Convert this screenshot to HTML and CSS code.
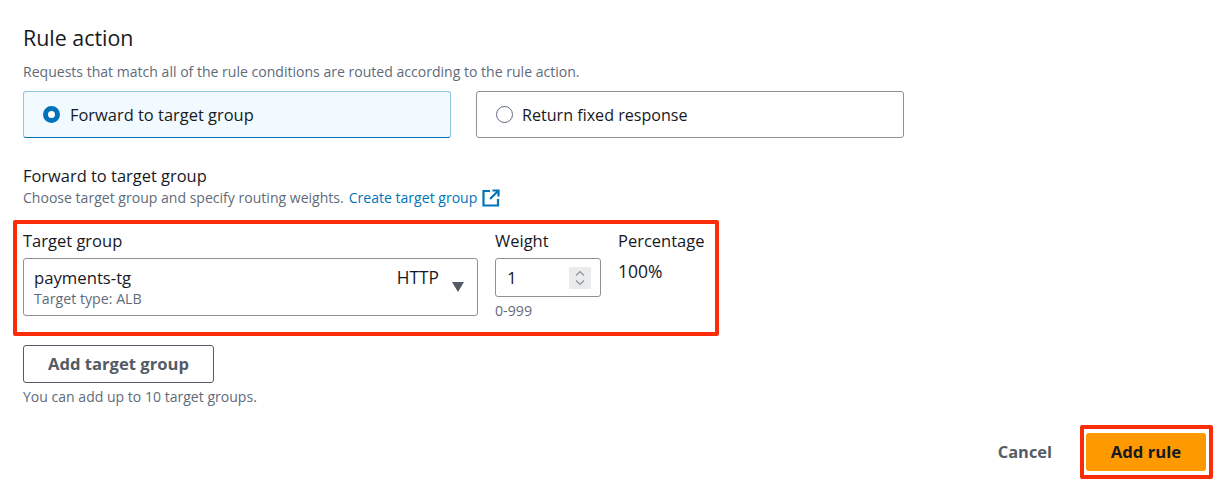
FILE: index.html
```html
<!DOCTYPE html>
<html lang="en">
<head>
  <meta charset="UTF-8">
  <title>Rule action</title>
  <link rel="stylesheet" href="styles.css">
</head>
<body>
  <main class="page">
    <h2 class="title">Rule action</h2>
    <p class="hint hint-top">Requests that match all of the rule conditions are routed according to the rule action.</p>

    <div class="tiles">
      <div class="tile tile-on"><span class="radio radio-on"></span>Forward to target group</div>
      <div class="tile tile-off"><span class="radio"></span>Return fixed response</div>
    </div>

    <div class="section-label">Forward to target group</div>
    <p class="hint hint-link">Choose target group and specify routing weights. <a class="link" href="#">Create target group</a>
      <svg class="ext" width="18" height="18" viewBox="0 0 18 18" fill="none" stroke="#0073bb" stroke-width="2.2"><path d="M8 2H1.5v14.5H16V10"/><path d="M10.5 1.5h6v6"/><path d="M16.5 1.5L8 10"/></svg>
    </p>

    <div class="highlight group-row">
      <div class="col col-target">
        <label class="field-label">Target group</label>
        <div class="select">
          <div class="select-main">
            <div class="select-name">payments-tg</div>
            <div class="select-type">Target type: ALB</div>
          </div>
          <div class="select-proto">HTTP</div>
          <span class="caret"></span>
        </div>
      </div>
      <div class="col col-weight">
        <label class="field-label">Weight</label>
        <div class="number">
          <span>1</span>
          <svg class="spin" width="22" height="22" viewBox="0 0 22 22" fill="none" stroke="#8d9299" stroke-width="1.2"><rect width="22" height="22" fill="#e9ebed" stroke="none"/><path d="M7 8.5l4-4 4 4"/><path d="M7 13.5l4 4 4-4"/></svg>
        </div>
        <div class="range">0-999</div>
      </div>
      <div class="col col-percent">
        <label class="field-label">Percentage</label>
        <div class="percent">100%</div>
      </div>
    </div>

    <button class="btn" type="button">Add target group</button>
    <p class="hint hint-limit">You can add up to 10 target groups.</p>

    <div class="actions">
      <a class="cancel" href="#">Cancel</a>
      <div class="highlight submit-wrap"><button class="btn-primary" type="button">Add rule</button></div>
    </div>
  </main>
</body>
</html>
```

FILE: styles.css
```css
* {
  box-sizing: border-box;
}
body {
  margin: 0;
  background: #fff;
  color: #16191f;
  font-family: "Open Sans", "Noto Sans", sans-serif;
}
.page {
  padding: 24px 11px 0 23px;
}
.title {
  margin: 0;
  font-size: 21.4px;
  font-weight: 400;
  line-height: 27px;
}
.hint {
  margin: 0;
  color: #5f6b7a;
  font-size: 14.05px;
  line-height: 18px;
}
.hint-top {
  margin-top: 12px;
}
.tiles {
  display: flex;
  gap: 25px;
  margin-top: 10px;
}
.tile {
  display: flex;
  align-items: center;
  width: 428px;
  height: 47px;
  padding-left: 19px;
  border: 1px solid #8d9299;
  border-radius: 3px;
  font-size: 16.45px;
}
.tile-on {
  background: #f1faff;
  border-color: #8ec6e6 #8ec6e6 #0073bb;
}
.tile-off {
  font-size: 16.1px;
}
.tile-off .radio {
  margin-right: 9px;
}
.radio {
  width: 17px;
  height: 17px;
  margin-right: 10px;
  border: 1px solid #5f6b7a;
  border-radius: 50%;
  background: #fff;
}
.radio-on {
  border: 5px solid #0073bb;
}
.section-label {
  margin-top: 28px;
  font-size: 16.45px;
  line-height: 20px;
}
.hint-link {
  display: flex;
  align-items: center;
  gap: 5px;
  margin-top: 3px;
}
.link {
  color: #0073bb;
  text-decoration: none;
}
.highlight {
  border: 4px solid #fb2c0a;
  border-radius: 2px;
}
.group-row {
  display: flex;
  width: 706px;
  height: 116px;
  margin: 13px 0 9px -10px;
  padding: 6px 6px 0;
}
.col {
  display: flex;
  flex-direction: column;
}
.col-target {
  width: 455px;
}
.col-weight {
  width: 106px;
  margin-left: 17px;
}
.col-percent {
  margin-left: 17px;
}
.field-label {
  font-size: 16.5px;
  line-height: 22px;
  margin-bottom: 6px;
}
.select {
  display: flex;
  height: 58px;
  padding: 8px 13px 0 10px;
  border: 1px solid #8d9299;
  border-radius: 3px;
}
.select-main {
  flex: 1;
}
.select-name {
  font-size: 16.7px;
  line-height: 22px;
}
.select-type {
  margin-top: 1px;
  color: #5f6b7a;
  font-size: 14.2px;
  line-height: 18px;
}
.select-proto {
  font-size: 17.3px;
  line-height: 22px;
}
.caret {
  width: 0;
  height: 0;
  margin: 15px 0 0 13px;
  border-left: 6px solid transparent;
  border-right: 6px solid transparent;
  border-top: 10px solid #545b64;
}
.number {
  display: flex;
  align-items: center;
  justify-content: space-between;
  height: 39px;
  padding: 0 9px 0 11px;
  border: 1px solid #8d9299;
  border-radius: 3px;
  font-size: 17px;
}
.range {
  margin-top: 5px;
  color: #5f6b7a;
  font-size: 14.2px;
  line-height: 18px;
}
.percent {
  font-size: 17.5px;
  line-height: 22px;
  margin-top: 2px;
}
.btn {
  display: block;
  width: 191px;
  height: 38px;
  padding: 0 0 2px;
  background: #fff;
  border: 1px solid #545b64;
  border-radius: 3px;
  color: #545b64;
  font-family: inherit;
  font-size: 16.6px;
  font-weight: 700;
}
.hint-limit {
  margin-top: 5px;
}
.actions {
  display: flex;
  align-items: center;
  justify-content: flex-end;
  margin-top: 19px;
}
.cancel {
  margin-right: 28px;
  padding-bottom: 2px;
  color: #545b64;
  font-size: 16.4px;
  font-weight: 700;
  text-decoration: none;
}
.submit-wrap {
  width: 133px;
  height: 54px;
  padding: 4px 3px 0 2px;
}
.btn-primary {
  display: block;
  width: 120px;
  height: 38px;
  padding: 0 0 2px;
  background: #ff9900;
  border: 0;
  border-radius: 3px;
  color: #16191f;
  font-family: inherit;
  font-size: 16.7px;
  font-weight: 700;
}
```
